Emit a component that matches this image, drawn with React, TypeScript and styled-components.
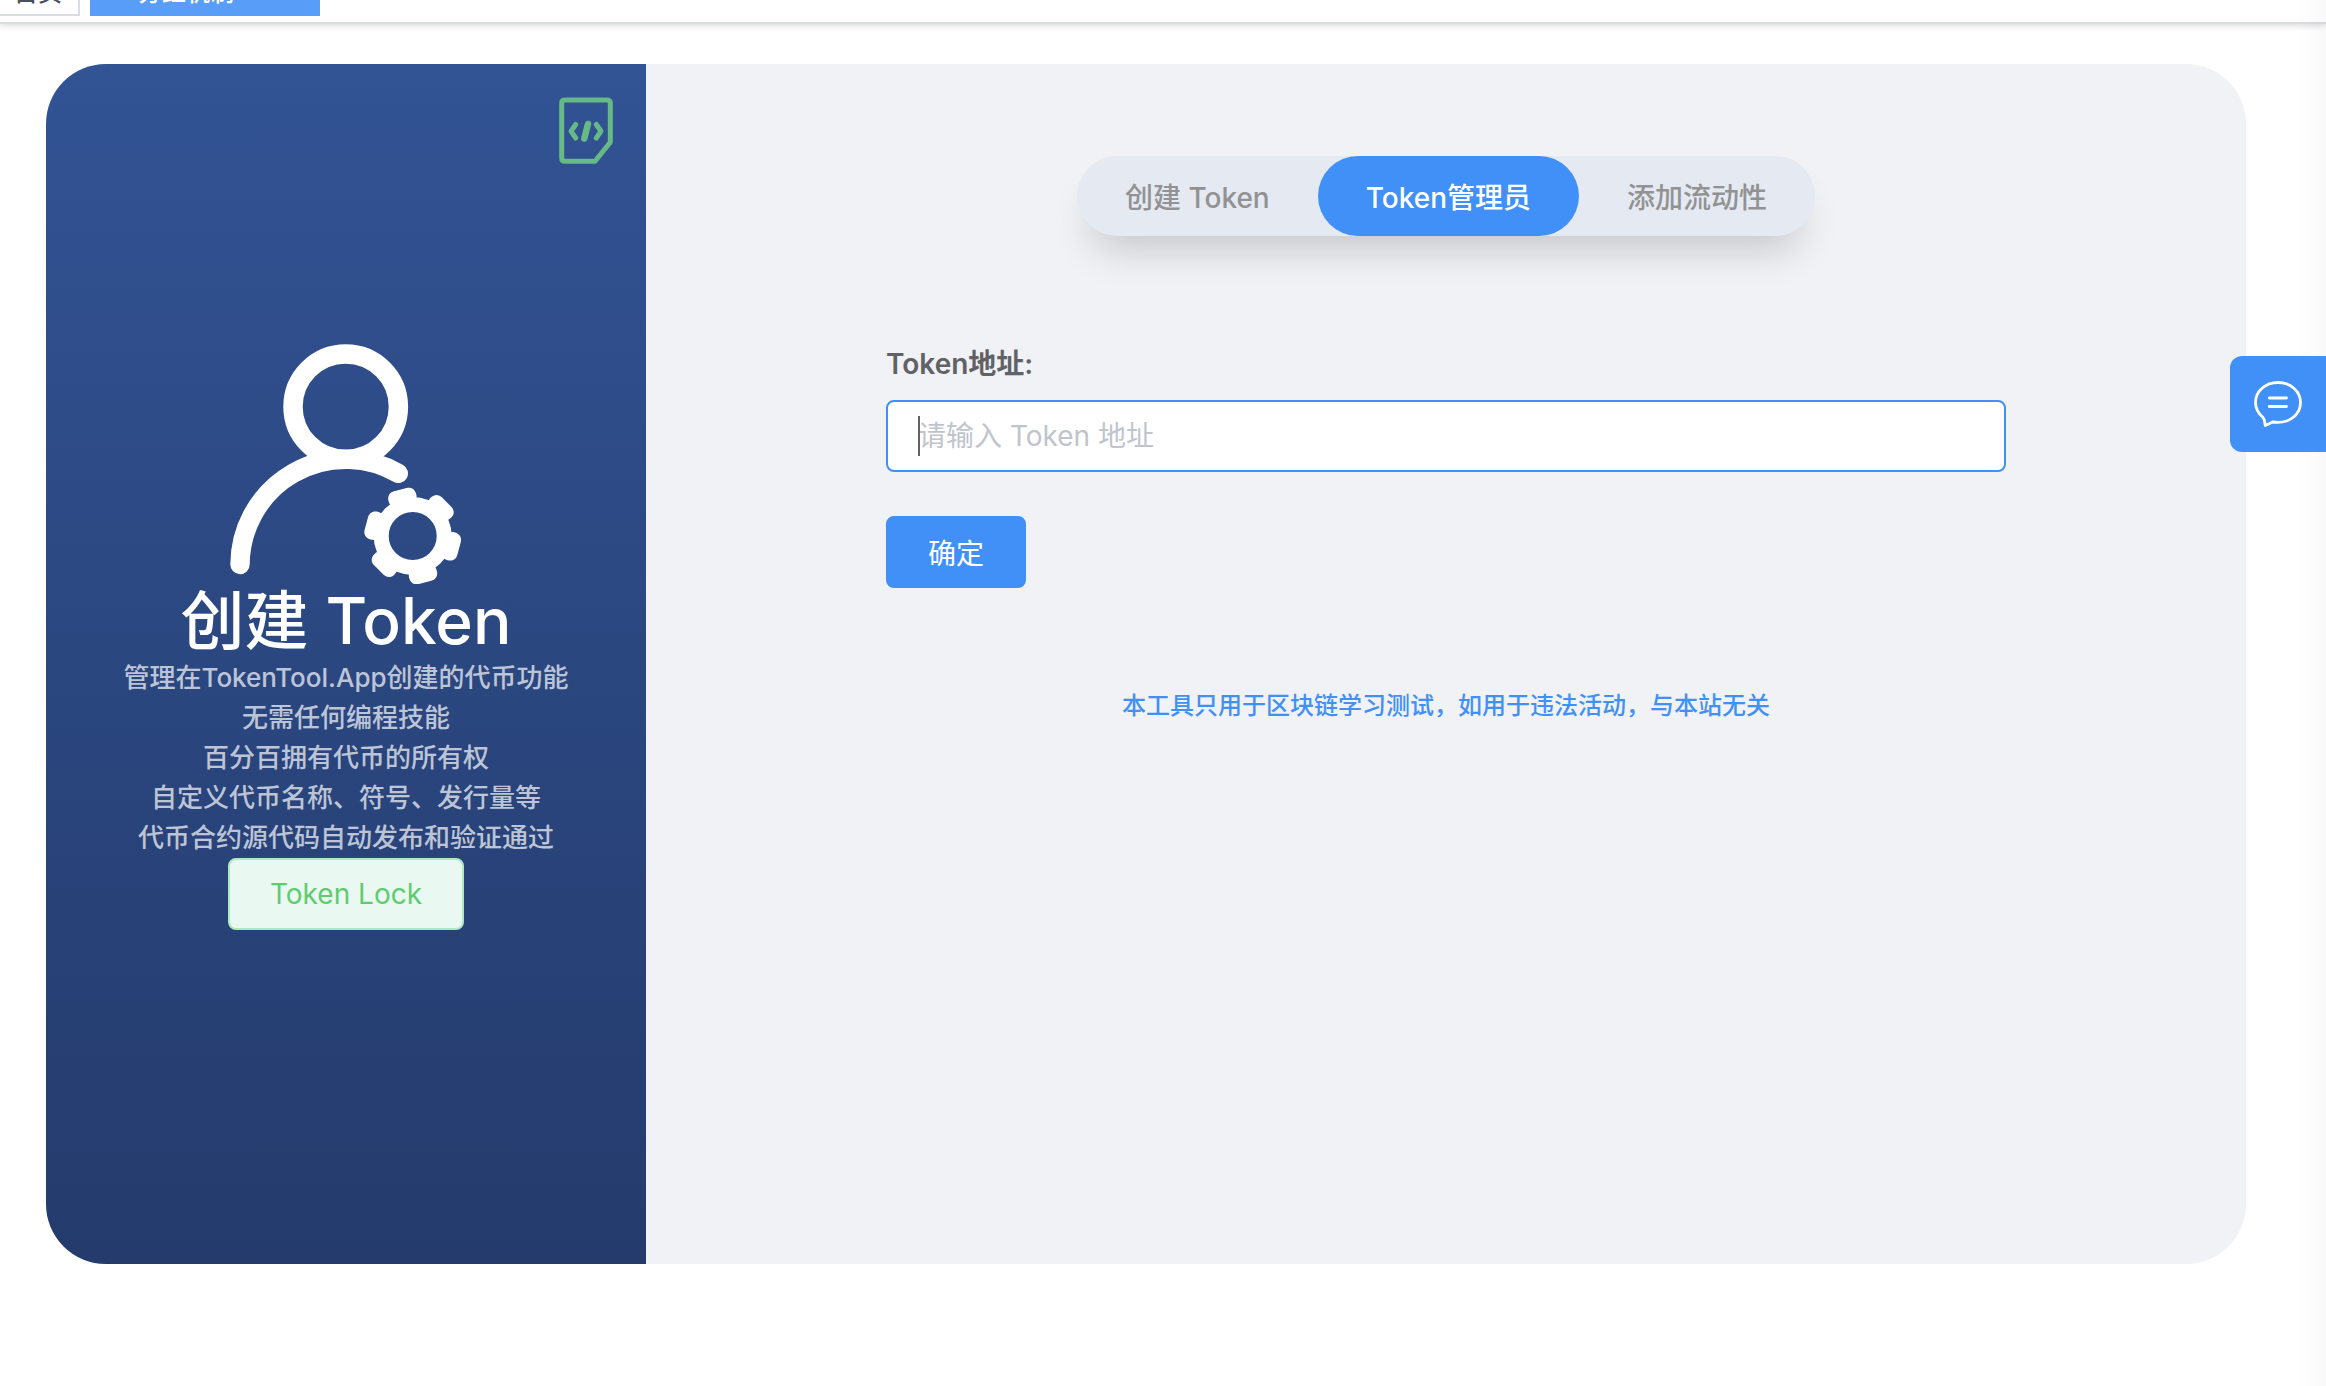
import { useState } from "react";
import styled, { createGlobalStyle } from "styled-components";

const blue = "#4090f7";

const GlobalStyle = createGlobalStyle`
  *, *::before, *::after { box-sizing: border-box; }
  body {
    margin: 0;
    background: #fff;
    color: #606266;
    font-family: Inter, "Noto Sans CJK SC", sans-serif;
    font-size: 28px;
  }
  button, input { font: inherit; }
  h1, p { margin: 0; padding: 0; }
`;

const Page = styled.div`
  min-height: 100vh;
  overflow: hidden;
`;

const TagsBar = styled.nav`
  display: flex;
  align-items: flex-end;
  gap: 10px;
  height: 24px;
  padding-bottom: 6px;
  border-bottom: 2px solid #d8dce5;
  box-shadow: 0 2px 6px rgba(0, 0, 0, 0.14);
`;

const Tag = styled.a<{ $active?: boolean }>`
  display: flex;
  flex-shrink: 0;
  align-items: center;
  gap: 14px;
  height: 52px;
  padding: ${(p) => (p.$active ? "0 54px 0 16px" : "0 16px 0 14px")};
  border: 2px solid ${(p) => (p.$active ? "#589df8" : "#d8dce5")};
  border-left-width: ${(p) => (p.$active ? "2px" : "0")};
  background: ${(p) => (p.$active ? "#589df8" : "#fff")};
  color: ${(p) => (p.$active ? "#fff" : "#495060")};
  font-size: 24px;
  font-weight: 500;
  text-decoration: none;
`;

const Dot = styled.span`
  width: 16px;
  height: 16px;
  border-radius: 50%;
  background: #fff;
`;

const Main = styled.main`
  padding: 40px 80px 122px 46px;
`;

const Card = styled.section`
  display: grid;
  grid-template-columns: 3fr 8fr;
  min-height: calc(100vh - 186px);
  border-radius: 60px;
  overflow: hidden;
  background: #f0f2f6;
`;

const Intro = styled.div`
  display: flex;
  flex-direction: column;
  align-items: center;
  padding: 33px;
  background: linear-gradient(#325394, #243b6c);
  text-align: center;
`;

const SourceLink = styled.a`
  align-self: flex-end;
  height: 68px;
  margin-bottom: 179px;
`;

const Title = styled.h1`
  color: #fff;
  font-size: 64px;
  font-weight: 500;
  line-height: 74px;
`;

const Feature = styled.p`
  color: rgba(255, 255, 255, 0.7);
  font-size: 26px;
  font-weight: 500;
  line-height: 40px;
  white-space: nowrap;
`;

const Button = styled.button<{ $light?: boolean }>`
  height: 72px;
  padding: 0 40px;
  border: 2px solid ${(p) => (p.$light ? "#afe9c0" : blue)};
  border-radius: 8px;
  background: ${(p) => (p.$light ? "#e9f8f1" : blue)};
  color: ${(p) => (p.$light ? "#5fcb71" : "#fff")};
  cursor: pointer;
`;

const Workspace = styled.div`
  display: flex;
  flex-direction: column;
  align-items: center;
  padding-top: 92px;
`;

const Tabs = styled.div`
  display: flex;
  border-radius: 40px;
  background: #e4e9f2;
  box-shadow: 0 26px 40px -14px rgba(0, 0, 0, 0.19);
`;

const Tab = styled.button<{ $active: boolean }>`
  height: 80px;
  padding: 0 48px;
  border: 0;
  border-radius: 40px;
  background: ${(p) => (p.$active ? blue : "transparent")};
  color: ${(p) => (p.$active ? "#fff" : "#929292")};
  font-weight: 500;
  white-space: nowrap;
  cursor: pointer;
`;

const Form = styled.form`
  display: flex;
  flex-direction: column;
  align-items: flex-start;
  width: 70%;
  margin-top: 108px;
`;

const Label = styled.label`
  margin-bottom: 16px;
  font-weight: 600;
  line-height: 40px;
`;

const Field = styled.div`
  position: relative;
  width: 100%;
  margin-bottom: 44px;
`;

const Input = styled.input`
  display: block;
  width: 100%;
  height: 72px;
  padding: 0 30px;
  border: 2px solid ${blue};
  border-radius: 8px;
  outline: none;
  background: #fff;
  color: #606266;
  &::placeholder { color: #c0c4cc; opacity: 1; }
`;

const Caret = styled.span`
  position: absolute;
  top: 16px;
  left: 32px;
  width: 2px;
  height: 40px;
  background: #606266;
`;

const Notice = styled.p`
  margin-top: 100px;
  color: ${blue};
  font-size: 24px;
  font-weight: 500;
  line-height: 36px;
`;

const ChatButton = styled.button`
  position: fixed;
  z-index: 1;
  top: 356px;
  right: 0;
  display: grid;
  place-items: center;
  width: 96px;
  height: 96px;
  padding: 0;
  border: 0;
  border-radius: 12px 0 0 12px;
  background: ${blue};
  cursor: pointer;
`;

const EdgeShade = styled.div`
  position: fixed;
  inset: 0 0 0 auto;
  width: 32px;
  background: linear-gradient(to right, rgba(0, 0, 0, 0), rgba(0, 0, 0, 0.025));
  pointer-events: none;
`;

const SourceIcon = () => (
  <svg width="54" height="68" viewBox="0 0 54 68" fill="none" stroke="#67b988" strokeWidth="5" strokeLinejoin="round" strokeLinecap="round">
    <path d="M6 3H48Q51.3 3 51.3 6V45.3L36 64.3H6Q2.7 64.3 2.7 61V6Q2.7 3 6 3Z" />
    <path d="M16.7 27.5L12 34.2L16.7 41M37.3 27.5L42 34.2L37.3 41" />
    <path d="M29 27L25.3 41.5" strokeWidth="6.5" />
  </svg>
);

const gearAngles = [-15, 45, 105, 165, 225, 285];

const ManagerIcon = () => (
  <svg width="240" height="240" viewBox="0 0 240 240" fill="none" stroke="#fff" strokeWidth="19.4" strokeLinecap="round">
    <circle cx="119.7" cy="62.7" r="52.7" />
    <path d="M14 220.5A105.7 105.7 0 0 1 172.3 129.3" />
    <circle cx="186.7" cy="192" r="31.5" strokeWidth="15" />
    <g fill="#fff" stroke="none" transform="translate(186.7 192)">
      {gearAngles.map((angle) => (
        <path
          key={angle}
          transform={`rotate(${angle})`}
          d="M-14.3 -40C-14.3 -45 -11 -48 -6.5 -48H6.5C11 -48 14.3 -45 14.3 -40C14.3 -37 13.5 -35 12 -33L8 -28H-8L-12 -33C-13.5 -35 -14.3 -37 -14.3 -40Z"
        />
      ))}
    </g>
  </svg>
);

const ChatIcon = () => (
  <svg width="48" height="48" viewBox="0 0 48 48" fill="none" stroke="#fff" strokeWidth="2.8" strokeLinecap="round" strokeLinejoin="round">
    <path d="M8.8 37.3C4.5 33.5 1.5 28.5 1.5 22.5C1.5 11 11.5 2.5 24 2.5C36.5 2.5 46.5 11 46.5 22.5C46.5 34 36.5 42.3 24 42.3L18.7 42L11.3 45.5L10.2 39.5Z" />
    <path d="M15.2 18H32.5M15.2 26.5H32.5" />
  </svg>
);

const features = [
  "管理在TokenTool.App创建的代币功能",
  "无需任何编程技能",
  "百分百拥有代币的所有权",
  "自定义代币名称、符号、发行量等",
  "代币合约源代码自动发布和验证通过",
];

const tabs = ["创建 Token", "Token管理员", "添加流动性"];

export default function App() {
  const [active, setActive] = useState(1);
  const [address, setAddress] = useState("");

  return (
    <Page>
      <GlobalStyle />
      <TagsBar>
        <Tag href="#home">首页</Tag>
        <Tag href="#dividend" $active>
          <Dot />
          分红机制
          <span>×</span>
        </Tag>
      </TagsBar>
      <Main>
        <Card>
          <Intro>
            <SourceLink href="#source" aria-label="源代码">
              <SourceIcon />
            </SourceLink>
            <ManagerIcon />
            <Title>创建 Token</Title>
            {features.map((text) => (
              <Feature key={text}>{text}</Feature>
            ))}
            <Button type="button" $light>Token Lock</Button>
          </Intro>
          <Workspace>
            <Tabs>
              {tabs.map((name, i) => (
                <Tab key={name} type="button" $active={i === active} onClick={() => setActive(i)}>
                  {name}
                </Tab>
              ))}
            </Tabs>
            <Form onSubmit={(e) => e.preventDefault()}>
              <Label htmlFor="address">Token地址:</Label>
              <Field>
                <Input
                  id="address"
                  placeholder="请输入 Token 地址"
                  value={address}
                  onChange={(e) => setAddress(e.target.value)}
                />
                {address === "" && <Caret />}
              </Field>
              <Button type="submit">确定</Button>
            </Form>
            <Notice>本工具只用于区块链学习测试，如用于违法活动，与本站无关</Notice>
          </Workspace>
        </Card>
      </Main>
      <ChatButton type="button" aria-label="在线客服">
        <ChatIcon />
      </ChatButton>
      <EdgeShade />
    </Page>
  );
}
